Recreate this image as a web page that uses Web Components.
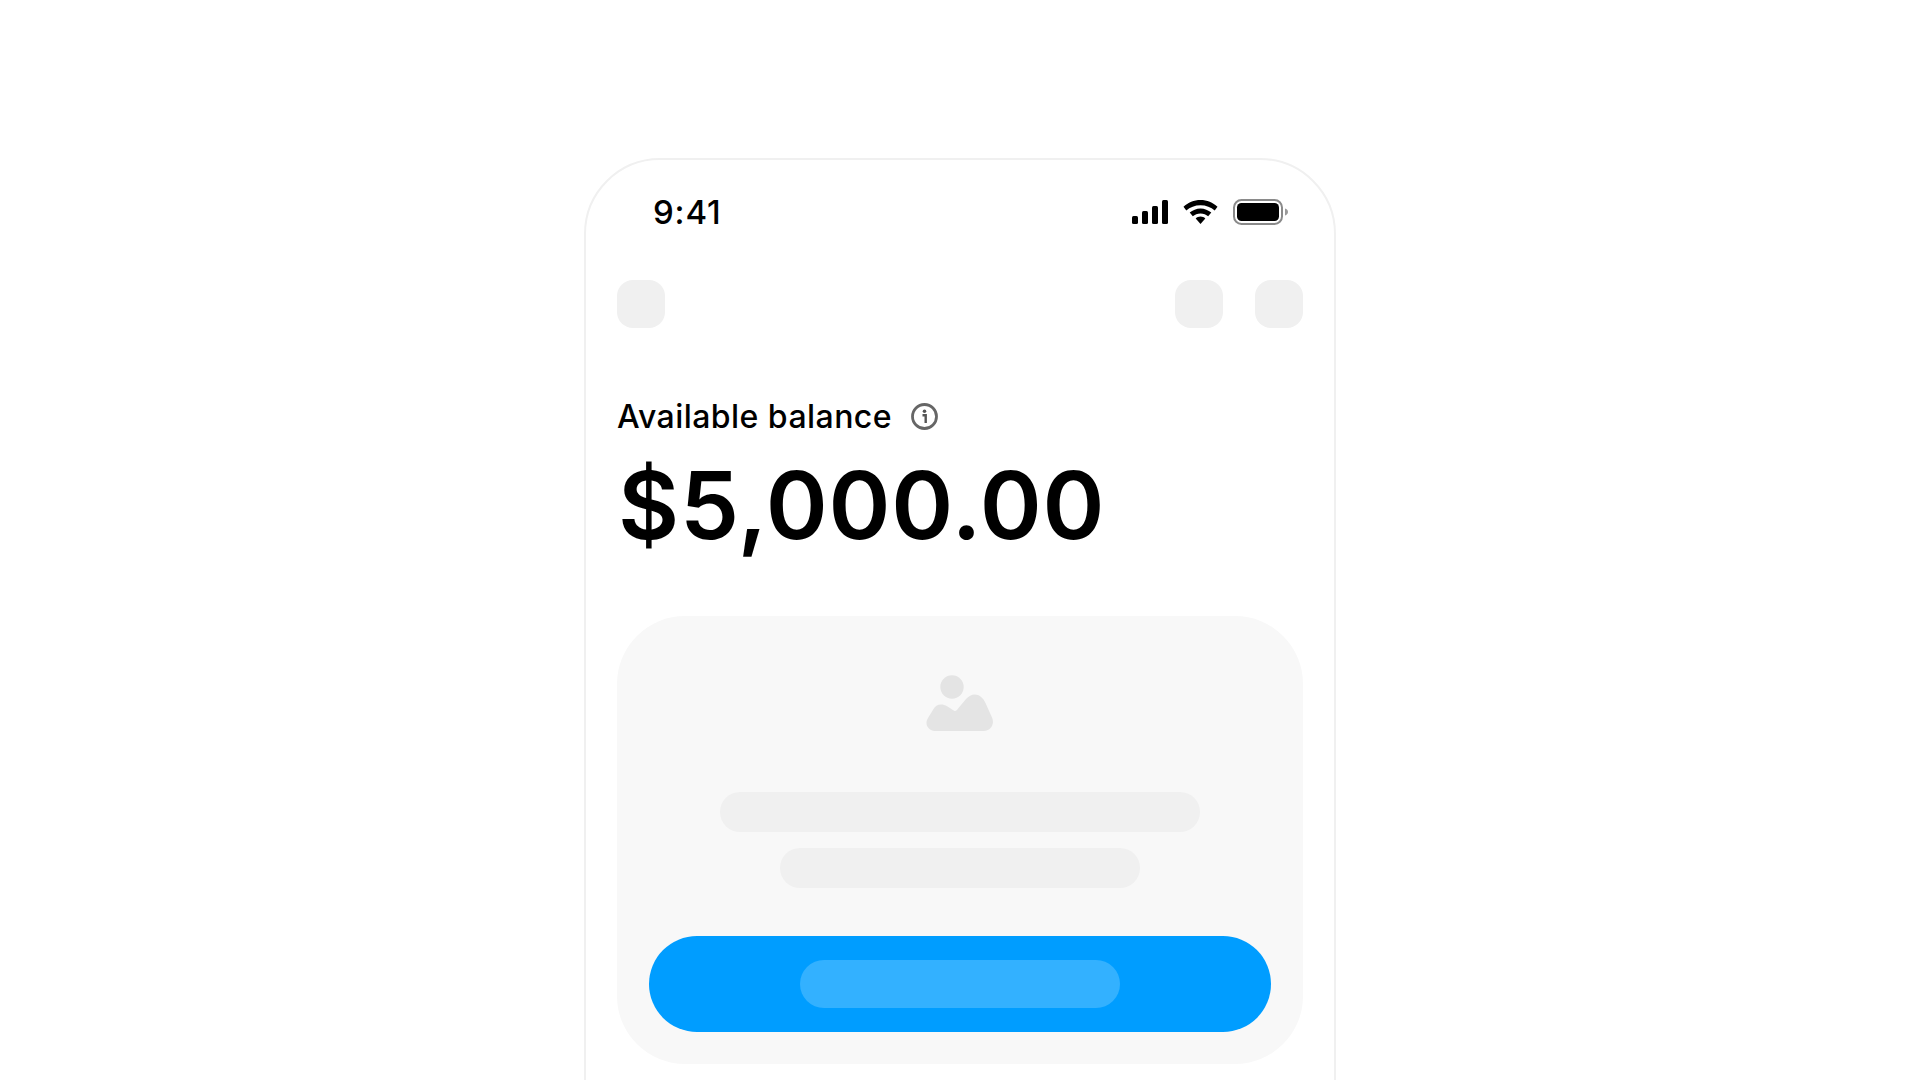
<!DOCTYPE html>
<html>
<head>
<meta charset="utf-8">
<title>Available balance</title>
<style>
    html, body{
        margin: 0;
        height: 1080px;
        overflow: hidden;
        background: #fff;
        font-family: Inter, "Liberation Sans", sans-serif;
        color: #000;
    }
</style>
</head>
<body>
<template id="tmpl-phone">
    <style>
        :host{
            display: flex;
            justify-content: center;
            padding-top: 158px;
        }
        .frame{
            box-sizing: border-box;
            width: 752px;
            height: 1000px;
            border: 2px solid #f0f0f0;
            border-radius: 76px 76px 0 0;
            padding: 0 31px;
        }
    </style>
    <div class="frame"><slot></slot></div>
</template>

<template id="tmpl-status">
    <style>
        :host{
            display: flex;
            justify-content: space-between;
            align-items: center;
            height: 104px;
            padding: 0 15px 0 36px;
            margin-bottom: 16px;
        }
        .time{
            font-size: 33px;
            font-weight: 550;
            letter-spacing: .8px;
        }
        .icons{
            display: flex;
            align-items: center;
            gap: 15px;
        }
        svg{ display: block; }
    </style>
    <span class="time"><slot></slot></span>
    <div class="icons">
        <svg width="36" height="24" viewBox="0 0 36 24">
            <rect x="0" y="16" width="6" height="8" rx="1.5"/>
            <rect x="10" y="11" width="6" height="13" rx="1.5"/>
            <rect x="20" y="6" width="6" height="18" rx="1.5"/>
            <rect x="30" y="0" width="6" height="24" rx="1.5"/>
        </svg>
        <svg width="35" height="24" viewBox="0 0 35 24">
            <path d="M17.500 0C11 0 5 2.500 .5 6.800L3.300 10.600C7 7.100 12 5.200 17.500 5.200S28 7.100 31.700 10.600L34.500 6.800C30 2.500 24 0 17.500 0Z"/>
            <path d="M17.500 8.400C13.400 8.400 9.700 10 6.700 12.600L9.800 16.300C11.800 14.500 14.500 13.400 17.500 13.400S23.200 14.500 25.200 16.300L28.300 12.600C25.300 10 21.600 8.400 17.500 8.400Z"/>
            <path d="M17.500 16.600C15.700 16.600 14 17.300 12.700 18.400L17.500 24L22.300 18.400C21 17.300 19.300 16.600 17.500 16.600Z"/>
        </svg>
        <svg width="55" height="26" viewBox="0 0 55 26">
            <rect x="1" y="1" width="48" height="24" rx="7.500" fill="none" stroke="#8a8a8a" stroke-width="2"/>
            <rect x="4" y="4" width="42" height="18" rx="4.500"/>
            <path d="M52 9.500C53.800 10.100 55 11.400 55 13S53.800 15.900 52 16.500Z" fill="#9a9a9a"/>
        </svg>
    </div>
</template>

<template id="tmpl-skel">
    <style>
        :host{
            display: block;
            flex: none;
            width: var(--w, 48px);
            height: var(--h, 48px);
            border-radius: var(--r, 16px);
            background: var(--c, #f0f0f0);
        }
    </style>
</template>

<template id="tmpl-actions">
    <style>
        :host{
            display: flex;
            align-items: center;
            height: 48px;
        }
        .right{
            margin-left: auto;
            display: flex;
            gap: 32px;
        }
    </style>
    <skel-box></skel-box>
    <div class="right">
        <skel-box></skel-box>
        <skel-box></skel-box>
    </div>
</template>

<template id="tmpl-balance">
    <style>
        :host{
            display: block;
            padding-top: 69px;
        }
        .label{
            display: flex;
            align-items: center;
            gap: 19px;
            height: 40px;
            font-size: 32px;
            font-weight: 550;
            line-height: 40px;
            letter-spacing: .45px;
        }
        .amount{
            margin-top: 11px;
            font-size: 94px;
            font-weight: 600;
            line-height: 114px;
            letter-spacing: .8px;
            padding-left: 1px;
        }
        svg{ display: block; margin-top: -2px; }
    </style>
    <div class="label">
        <span><slot name="label"></slot></span>
        <svg width="27" height="27" viewBox="0 0 27 27">
            <circle cx="13.500" cy="13.500" r="12" fill="none" stroke="#666" stroke-width="2.800"/>
            <circle cx="13.500" cy="8.300" r="1.800" fill="#555"/>
            <path d="M11.500 12.200H14.700V20" fill="none" stroke="#555" stroke-width="2.400"/>
        </svg>
    </div>
    <div class="amount"><slot name="amount"></slot></div>
</template>

<template id="tmpl-card">
    <style>
        :host{
            display: flex;
            flex-direction: column;
            align-items: center;
            box-sizing: border-box;
            height: 448px;
            margin-top: 54px;
            padding: 59px 32px 0;
            background: #f8f8f8;
            border-radius: 68px;
        }
        svg{ display: block; margin-bottom: 60px; }
        .button{
            display: flex;
            align-items: center;
            justify-content: center;
            align-self: stretch;
            height: 96px;
            margin-top: 48px;
            border-radius: 48px;
            background: #009dff;
        }
        .bar2{ margin-top: 16px; }
    </style>
    <svg width="68" height="57" viewBox="0 0 68 57">
        <circle cx="26" cy="12" r="11.700" fill="#e4e4e4"/>
        <path d="M10 56H57.500C64.500 56 69 49 66 42.500L59.500 28C57 22.500 53 19.500 49 19.500C45.500 19.500 42.500 21.500 40 24L32.500 33C31.500 34.500 30 36.500 28.500 36L21.500 31.500C19 30 17 29.500 15 29.500C11.500 29.500 9 31.500 7.500 34L2 43C-2 49.500 2.500 56 10 56Z" fill="#e4e4e4"/>
    </svg>
    <skel-box style="--w:480px;--h:40px;--r:20px"></skel-box>
    <skel-box class="bar2" style="--w:360px;--h:40px;--r:20px"></skel-box>
    <div class="button">
        <skel-box style="--w:320px;--h:48px;--r:24px;--c:#33b1ff"></skel-box>
    </div>
</template>

<script>
    function define(name, tmplId){
        customElements.define(name, class extends HTMLElement{
            constructor(){
                super();
                this.attachShadow({ mode: 'open' });
                this.shadowRoot.append(document.getElementById(tmplId).content.cloneNode(true));
            }
        });
    }
    define('skel-box', 'tmpl-skel');
    define('phone-frame', 'tmpl-phone');
    define('status-bar', 'tmpl-status');
    define('top-actions', 'tmpl-actions');
    define('balance-head', 'tmpl-balance');
    define('promo-card', 'tmpl-card');
</script>

<phone-frame>
    <status-bar>9:41</status-bar>
    <top-actions></top-actions>
    <balance-head>
        <span slot="label">Available balance</span>
        <span slot="amount">$5,000.00</span>
    </balance-head>
    <promo-card></promo-card>
</phone-frame>
</body>
</html>
